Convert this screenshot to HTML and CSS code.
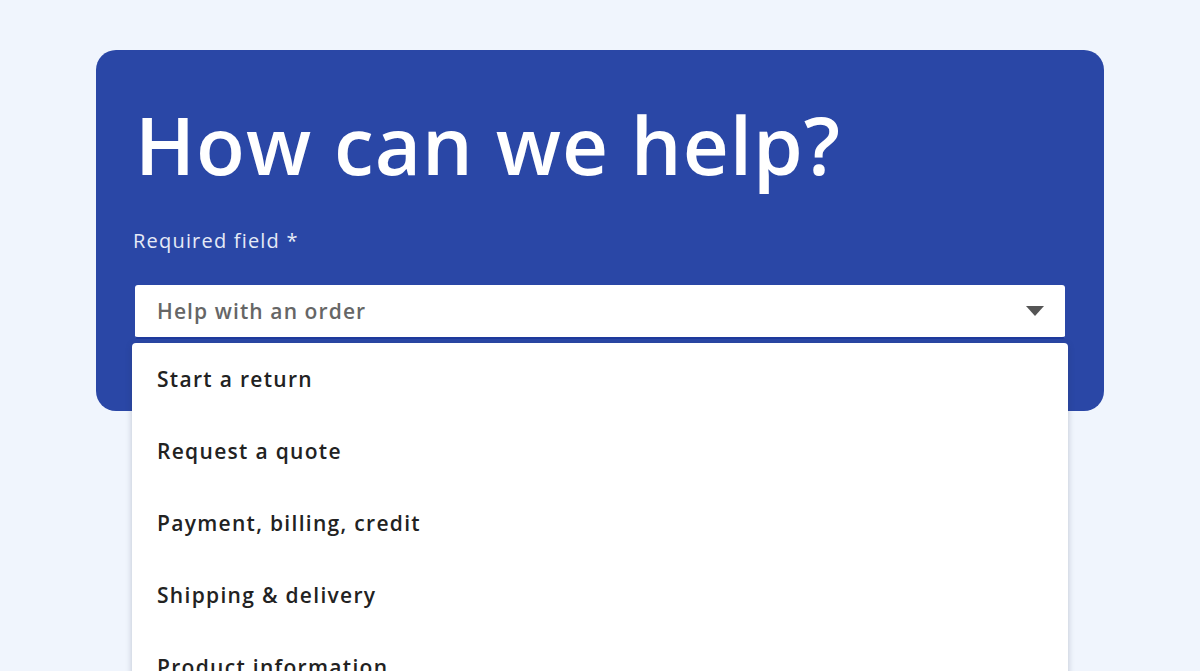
FILE: index.html
```html
<!DOCTYPE html>
<html lang="en">
<head>
   <meta charset="UTF-8">
   <title>How can we help?</title>
   <link rel="stylesheet" href="styles.css">
</head>
<body>
   <div class="help-card">
      <h1 class="title">How can we help?</h1>
      <p class="label">Required field *</p>

      <div class="select-wrap">
         <div class="select-box">
            <span class="select-text">Help with an order</span>
            <span class="arrow"></span>
         </div>

         <ul class="dropdown">
            <li class="option">Start a return</li>
            <li class="option">Request a quote</li>
            <li class="option">Payment, billing, credit</li>
            <li class="option">Shipping &amp; delivery</li>
            <li class="option">Product information</li>
         </ul>
      </div>
   </div>
</body>
</html>
```

FILE: styles.css
```css
body{
   margin: 0;
   background-color: #f0f5fd;
   font-family: "Open Sans", Arial, sans-serif;
   overflow: hidden;
   height: 671px;
}

.help-card{
   margin: 50px 96px 0 96px;
   height: 361px;
   box-sizing: border-box;
   background-color: #2a47a6;
   border-radius: 20px;
   padding: 0 39px 0 39px;
}

.title{
   margin: 0;
   padding-top: 44px;
   color: white;
   font-size: 80px;
   font-weight: 600;
   line-height: 100px;
   letter-spacing: 1px;
}

.label{
   margin: 35px 0 0 -2px;
   color: #e6ebf7;
   font-size: 20px;
   line-height: 24px;
   letter-spacing: 1.2px;
}

.select-wrap{
   position: relative;
   margin-top: 32px;
}

.select-box{
   display: flex;
   align-items: center;
   justify-content: space-between;
   height: 54px;
   background-color: white;
   border-radius: 3px;
   border-bottom: 2px solid #1e3a9c;
   padding: 0 21px 0 22px;
   box-sizing: border-box;
}

.select-text{
   color: #666;
   font-size: 21px;
   font-weight: 600;
   letter-spacing: 1.1px;
}

.arrow{
   width: 0;
   height: 0;
   border-left: 9px solid transparent;
   border-right: 9px solid transparent;
   border-top: 10px solid #555;
}

/* open list sits over the card */
.dropdown{
   position: absolute;
   top: 58px;
   left: -3px;
   right: -3px;
   margin: 0;
   padding: 0;
   list-style: none;
   background-color: white;
   border-radius: 4px;
   box-shadow: 0 2px 6px rgba(40, 50, 80, 0.25);
   height: 400px;
}

.option{
   padding: 0 25px;
   height: 72px;
   line-height: 72px;
   color: #222;
   font-size: 21px;
   font-weight: 600;
   letter-spacing: 1.3px;
}
```
